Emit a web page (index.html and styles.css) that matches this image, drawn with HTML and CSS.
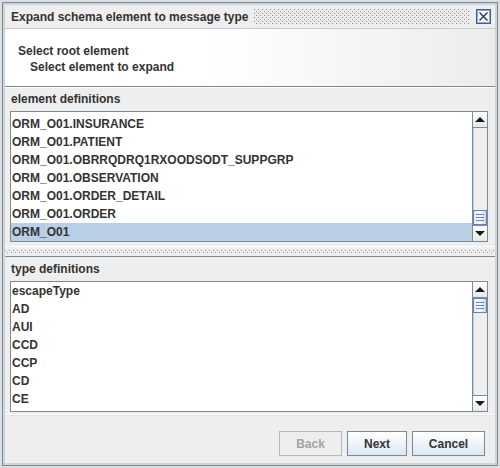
FILE: index.html
```html
<!DOCTYPE html>
<html>
<head>
<meta charset="utf-8">
<link rel="stylesheet" href="styles.css">
</head>
<body>
<div class="frame">
  <div class="titlebar">
    <span class="title">Expand schema element to message type</span>
    <span class="grip"></span>
    <span class="close">
      <svg width="15" height="15" viewBox="0 0 15 15">
        <rect x="0.5" y="0.5" width="14" height="14" fill="#f4f7fb" stroke="#3d5f96"/>
        <rect x="1.5" y="1.5" width="12" height="12" fill="none" stroke="#8fa9d0"/>
        <path d="M3.5 3.5 L11.5 11.5 M11.5 3.5 L3.5 11.5" stroke="#1d2e48" stroke-width="1.2"/>
      </svg>
    </span>
  </div>
  <div class="header">
    <div class="h1">Select root element</div>
    <div class="h2">Select element to expand</div>
  </div>
  <div class="pane top">
    <div class="label">element definitions</div>
    <div class="listbox">
      <div class="items pad-top">
        <div class="row">ORM_O01.INSURANCE</div>
        <div class="row">ORM_O01.PATIENT</div>
        <div class="row">ORM_O01.OBRRQDRQ1RXOODSODT_SUPPGRP</div>
        <div class="row">ORM_O01.OBSERVATION</div>
        <div class="row">ORM_O01.ORDER_DETAIL</div>
        <div class="row">ORM_O01.ORDER</div>
        <div class="row sel">ORM_O01</div>
      </div>
      <div class="sbar">
        <div class="sbtn up"><span class="tri-up"></span></div>
        <div class="track end">
          <div class="thumb"><span></span><span></span><span></span></div>
        </div>
        <div class="sbtn down"><span class="tri-down"></span></div>
      </div>
    </div>
  </div>
  <div class="divider"></div>
  <div class="pane bottom">
    <div class="label">type definitions</div>
    <div class="listbox">
      <div class="items">
        <div class="row">escapeType</div>
        <div class="row">AD</div>
        <div class="row">AUI</div>
        <div class="row">CCD</div>
        <div class="row">CCP</div>
        <div class="row">CD</div>
        <div class="row">CE</div>
      </div>
      <div class="sbar">
        <div class="sbtn up"><span class="tri-up"></span></div>
        <div class="track start">
          <div class="thumb"><span></span><span></span><span></span></div>
        </div>
        <div class="sbtn down"><span class="tri-down"></span></div>
      </div>
    </div>
  </div>
  <div class="buttons">
    <button class="btn disabled">Back</button>
    <button class="btn">Next</button>
    <button class="btn">Cancel</button>
  </div>
</div>
</body>
</html>
```
FILE: styles.css
```css
* { box-sizing: border-box; }
html, body { margin: 0; padding: 0; }
body {
  width: 500px;
  height: 468px;
  background: #d7dbdf;
  font-family: "Liberation Sans", Arial, sans-serif;
  font-weight: bold;
  font-size: 12px;
  color: #333333;
  overflow: hidden;
}
.frame {
  width: 500px;
  height: 468px;
  border: 2px solid #dde0e3;
  box-shadow: inset 0 0 0 1px #7d8894, inset 0 0 0 3px #cfd4d9;
  padding: 3px;
  display: flex;
  flex-direction: column;
  background: #eeeeee;
}
.titlebar {
  height: 24px;
  flex: none;
  display: flex;
  align-items: center;
  padding: 0 4px 0 6px;
  background: #eeeeee;
  border-bottom: 1px solid #c3ccd6;
}
.title { white-space: nowrap; }
.grip {
  flex: 1;
  height: 15px;
  margin: 0 6px 0 6px;
  background-image:
    radial-gradient(circle at 0.5px 0.5px, #858585 0.7px, transparent 0.9px),
    radial-gradient(circle at 0.5px 0.5px, #858585 0.7px, transparent 0.9px);
  background-size: 4px 4px, 4px 4px;
  background-position: 0 0, 2px 2px;
}
.close { width: 15px; height: 15px; display: block; }
.close svg { display: block; }
.header {
  height: 58px;
  flex: none;
  background: linear-gradient(to right, #ffffff 0%, #ffffff 40%, #ececec 100%);
  padding: 14px 0 0 13px;
  border-bottom: 1px solid #7a8a99;
}
.h1 { line-height: 16px; }
.h2 { line-height: 16px; padding-left: 12px; }
.pane {
  display: flex;
  flex-direction: column;
  padding: 0 7px 0 5px;
  background: #eeeeee;
}
.pane.top { height: 159px; border-top: 1px solid #ffffff; }
.pane.bottom { height: 158px; border-top: 1px solid #7a8a99; }
.label {
  height: 23px;
  line-height: 23px;
  padding-left: 1px;
  flex: none;
}
.pane.bottom .label { height: 24px; line-height: 24px; }
.listbox {
  height: 131px;
  flex: none;
  border: 1px solid #7a8a99;
  background: #ffffff;
  display: flex;
}
.items { flex: 1; overflow: hidden; }
.items.pad-top { padding-top: 3px; }
.row {
  height: 18px;
  line-height: 18px;
  padding-left: 1px;
  white-space: nowrap;
}
.row.sel { background: #b8cfe5; }
.sbar {
  width: 15px;
  flex: none;
  display: flex;
  flex-direction: column;
  border-left: 1px solid #7a8a99;
  background: #eeeeee;
}
.sbtn {
  height: 16px;
  flex: none;
  display: flex;
  align-items: center;
  justify-content: center;
  background: linear-gradient(#ffffff, #e6e9ec);
}
.sbtn.up { border-bottom: 1px solid #7a8a99; }
.sbtn.down { border-top: 1px solid #7a8a99; }
.tri-up {
  width: 0; height: 0;
  border-left: 5px solid transparent;
  border-right: 5px solid transparent;
  border-bottom: 5px solid #1a1a1a;
}
.tri-down {
  width: 0; height: 0;
  border-left: 5px solid transparent;
  border-right: 5px solid transparent;
  border-top: 5px solid #1a1a1a;
}
.track {
  flex: 1;
  display: flex;
  flex-direction: column;
  border-left: 1px solid #b8cfe5;
}
.track.end { justify-content: flex-end; }
.track.start { justify-content: flex-start; }
.thumb {
  height: 15px;
  margin-left: -1px;
  border: 1px solid #6382bf;
  background: linear-gradient(to right, #dde8f3, #ffffff 45%, #c4d6ea);
  display: flex;
  flex-direction: column;
  justify-content: center;
  gap: 2px;
  padding: 0 2px;
}
.thumb span { height: 1px; background: #6382bf; display: block; }
.divider {
  height: 10px;
  flex: none;
  border-top: 1px solid #ffffff;
  background-color: #eeeeee;
  background-image:
    radial-gradient(circle at 0.5px 0.5px, #a0a0a0 0.6px, transparent 0.9px),
    radial-gradient(circle at 0.5px 0.5px, #a0a0a0 0.6px, transparent 0.9px);
  background-size: 4px 4px, 4px 4px;
  background-position: 0 3px, 2px 5px;
  background-repeat: repeat-x;
}
.buttons {
  flex: 1;
  display: flex;
  justify-content: flex-end;
  align-items: flex-start;
  gap: 5px;
  padding: 16px 10px 0 0;
  border-top: 1px solid #ffffff;
  box-shadow: inset 0 1px 0 #e2e2e2;
}
.btn {
  height: 25px;
  font-family: "Liberation Sans", Arial, sans-serif;
  font-weight: bold;
  font-size: 12px;
  color: #333333;
  border: 1px solid #7a8a99;
  background: linear-gradient(#ffffff, #dde8f3);
  padding: 0;
  margin: 0;
}
.btn:nth-child(1) { width: 63px; }
.btn:nth-child(2) { width: 60px; }
.btn:nth-child(3) { width: 73px; }
.btn.disabled {
  color: #a3a3a3;
  border-color: #b8b8b8;
  background: #eeeeee;
}
```
